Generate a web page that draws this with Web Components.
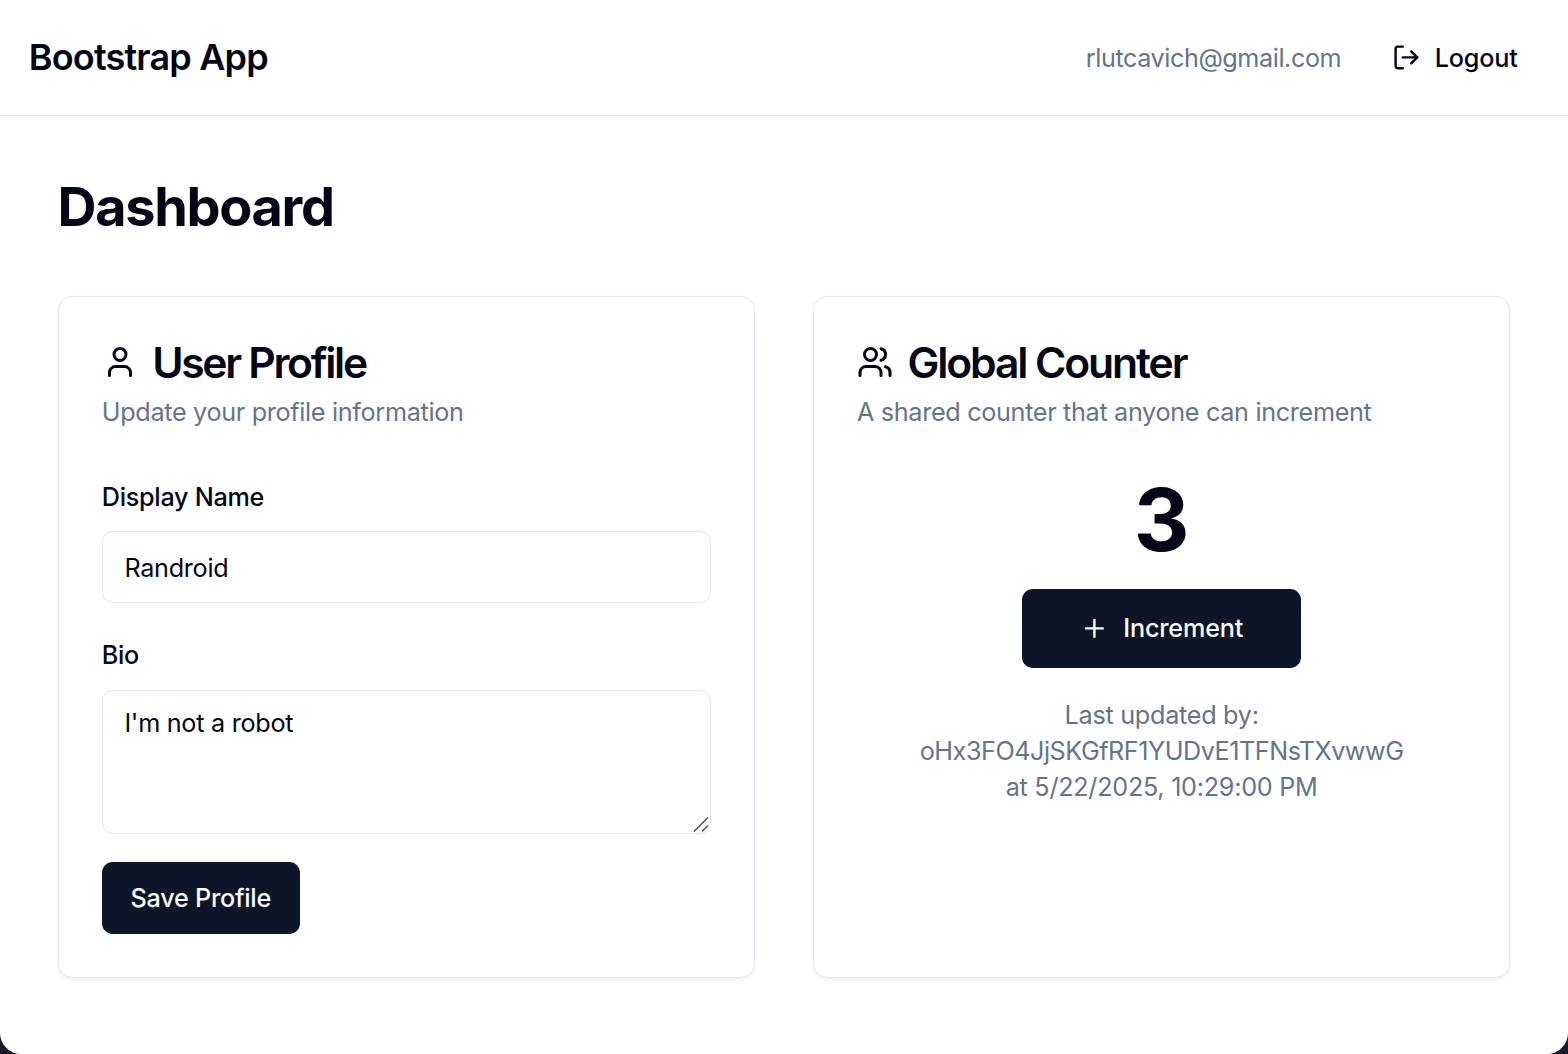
<!DOCTYPE html>
<html lang="en">
<head>
<meta charset="utf-8">
<title>Bootstrap App</title>
<style>
  html, body { margin: 0; height: 100%; background: #1b1b26; overflow: hidden; }
  body {
    --fg: #020617; --muted: #64748b; --line: #e2e8f0; --primary: #0d1628;
    font-family: Inter, "Liberation Sans", sans-serif;
    font-size: 25.2px; line-height: 36px; color: var(--fg);
    -webkit-font-smoothing: antialiased;
  }
</style>
</head>
<body>
<app-shell>
  <app-header slot="header" email="rlutcavich@gmail.com">Bootstrap App</app-header>
  <page-title>Dashboard</page-title>
  <card-grid>
    <ui-card icon="user">
      <span slot="title" style="letter-spacing:-2.3px">User Profile</span>
      <span slot="description">Update your profile information</span>
      <profile-form></profile-form>
    </ui-card>
    <ui-card icon="users">
      <span slot="title" style="letter-spacing:-2.1px">Global Counter</span>
      <span slot="description">A shared counter that anyone can increment</span>
      <global-counter></global-counter>
    </ui-card>
  </card-grid>
</app-shell>
<script>
const ICONS = {
  logout: '<path d="M9 21H5a2 2 0 0 1-2-2V5a2 2 0 0 1 2-2h4"/><path d="m16 17 5-5-5-5"/><path d="M21 12H9"/>',
  user: '<path d="M19 21v-2a4 4 0 0 0-4-4H9a4 4 0 0 0-4 4v2"/><circle cx="12" cy="7" r="4"/>',
  users: '<path d="M16 21v-2a4 4 0 0 0-4-4H6a4 4 0 0 0-4 4v2"/><circle cx="9" cy="7" r="4"/><path d="M22 21v-2a4 4 0 0 0-3-3.87"/><path d="M16 3.13a4 4 0 0 1 0 7.75"/>',
  plus: '<path d="M5 12h14"/><path d="M12 5v14"/>'
};
function define(name, render) {
  customElements.define(name, class extends HTMLElement {
    connectedCallback() {
      if (this.shadowRoot) return;
      this.attachShadow({ mode: 'open' }).innerHTML = render(this);
    }
  });
}
define('ui-icon', el => `
  <style>:host{display:block;flex:none;width:var(--size,28.8px);height:var(--size,28.8px)} svg{display:block;width:100%;height:100%}</style>
  <svg viewBox="0 0 24 24" fill="none" stroke="currentColor" stroke-width="2" stroke-linecap="round" stroke-linejoin="round">${ICONS[el.getAttribute('name')]}</svg>`);
define('app-shell', () => `
  <style>
    :host{display:flex;flex-direction:column;height:1054px;background:#fff;border-radius:0 0 21px 21px;overflow:hidden}
    main{padding:57.6px}
  </style>
  <slot name="header"></slot><main><slot></slot></main>`);
define('app-header', el => `
  <style>
    :host{display:flex;flex:none;box-sizing:border-box;height:116px;padding:0 28.8px;align-items:center;justify-content:space-between;border-bottom:1px solid var(--line)}
    h1{margin:0;font-size:36px;line-height:50.4px;font-weight:600;letter-spacing:-.82px}
    .right{display:flex;align-items:center;gap:28.8px}
    .email{color:var(--muted);letter-spacing:-.42px;padding-top:2px}
    ui-button{--px:21.6px;--h:64.8px;--ls:-.2px;--drop:2px}
  </style>
  <h1><slot></slot></h1>
  <div class="right"><span class="email">${el.getAttribute('email')}</span>
  <ui-button variant="ghost" icon="logout">Logout</ui-button></div>`);
define('ui-button', el => `
  <style>
    :host{display:inline-flex}
    button{all:unset;box-sizing:border-box;display:inline-flex;align-items:center;justify-content:center;gap:14.4px;height:var(--h,72px);padding:0 var(--px,28.8px);border-radius:10.8px;font-weight:520;letter-spacing:var(--ls,-.25px);white-space:nowrap;background:var(--primary);color:#f8fafc}
    :host([variant=ghost]) button{background:none;color:var(--fg)}
    span{padding-top:var(--drop,0)}
  </style>
  <button>${el.hasAttribute('icon') ? `<ui-icon name="${el.getAttribute('icon')}"></ui-icon>` : ''}<span><slot></slot></span></button>`);
define('page-title', () => `
  <style>:host{display:block;margin-bottom:56.6px;padding-top:1px} h2{margin:0;font-size:54px;line-height:64.8px;font-weight:720;letter-spacing:-1.32px}</style>
  <h2><slot></slot></h2>`);
define('card-grid', () => `
  <style>:host{display:grid;grid-template-columns:1fr 1fr;gap:57.6px}</style><slot></slot>`);
define('ui-card', el => `
  <style>
    :host{display:block;box-sizing:border-box;padding:43.2px;border:1px solid var(--line);border-radius:14.4px;box-shadow:0 1.8px 3.6px rgba(0,0,0,.05)}
    header{display:flex;flex-direction:column;gap:10.8px;margin-bottom:43.2px}
    .title{display:flex;align-items:center;gap:14.4px;height:43.2px;font-size:42.6px;line-height:43.2px;font-weight:620;--size:36px}
    ::slotted([slot=title]){padding-top:1.4px}
    .desc{color:var(--muted);letter-spacing:-.32px}
  </style>
  <header><div class="title"><ui-icon name="${el.getAttribute('icon')}"></ui-icon><slot name="title"></slot></div>
  <div class="desc"><slot name="description"></slot></div></header>
  <slot></slot>`);
define('profile-form', () => `
  <style>
    :host{display:flex;flex-direction:column;gap:28.8px;align-items:flex-start}
    .field{display:flex;flex-direction:column;gap:14.4px;width:100%}
    .field + .field{padding-top:.8px;margin-bottom:-.8px}
    .field + .field label{padding-top:1.2px;margin-bottom:-1.2px}
    label{font-weight:520;line-height:43.2px;padding-top:2.4px;margin-bottom:-2.4px;letter-spacing:-.28px}
    .box{display:block;box-sizing:border-box;width:100%;margin:0;border:1px solid var(--line);border-radius:10.8px;background:#fff;color:inherit;font:inherit;letter-spacing:-.27px;outline:none;resize:none}
    input{height:72px;padding:2px 21.6px 0}
    textarea{height:144px;padding:13.6px 21.6px;overflow:hidden}
    .area{position:relative;height:144px}
    .grip{position:absolute;right:1px;bottom:1.5px;width:17px;height:17px}
  </style>
  <div class="field"><label for="n">Display Name</label><input class="box" id="n" value="Randroid"></div>
  <div class="field"><label for="b">Bio</label><div class="area"><textarea class="box" id="b">I'm not a robot</textarea>
  <svg class="grip" viewBox="0 0 17 17" stroke="#555" stroke-width="1.6" fill="none"><path d="M1 15.5 15 1.5M9 15.5l6-6"/></svg></div></div>
  <ui-button>Save Profile</ui-button>`);
define('global-counter', () => `
  <style>
    :host{display:flex;flex-direction:column;align-items:center;gap:28.8px}
    .value{font-size:86.4px;line-height:86.4px;font-weight:720;padding-top:4px;margin-bottom:-4px}
    ui-button{--h:79.2px;--px:57.6px;--ls:-.17px}
    .meta{display:flex;flex-direction:column;align-items:center;color:var(--muted);letter-spacing:-.27px}
    .id{letter-spacing:-.46px}
  </style>
  <div class="value">3</div>
  <ui-button icon="plus">Increment</ui-button>
  <div class="meta"><span>Last updated by:</span><span class="id">oHx3FO4JjSKGfRF1YUDvE1TFNsTXvwwG</span><span>at 5/22/2025, 10:29:00 PM</span></div>`);
</script>
</body>
</html>
